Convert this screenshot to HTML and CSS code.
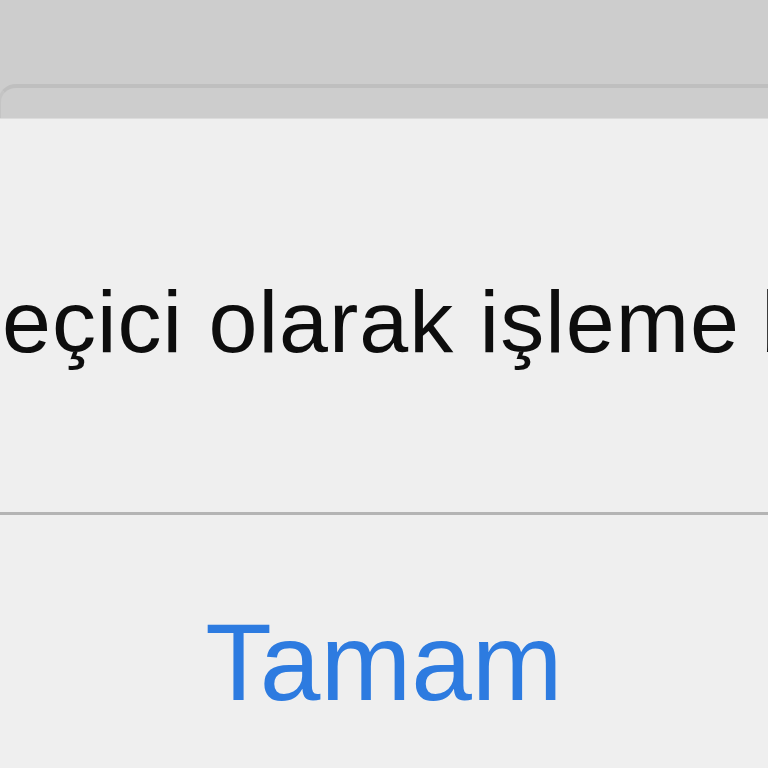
FILE: index.html
```html
<!DOCTYPE html>
<html lang="tr">
<head>
<meta charset="utf-8">
<link rel="stylesheet" href="styles.css">
</head>
<body>
<div class="page">
  <div class="backsheet"></div>
  <div class="alert">
    <div class="message"><p class="message-text">eçici olarak işleme <span class="message-tail">b</span></p></div>
    <div class="divider"></div>
    <div class="action"><span class="action-label">Tamam</span></div>
  </div>
</div>
</body>
</html>
```
FILE: styles.css
```css
html, body {
  margin: 0;
  padding: 0;
  width: 768px;
  height: 768px;
  overflow: hidden;
  background: #cdcdcd;
}
.page {
  width: 768px;
  height: 768px;
  display: flex;
  flex-direction: column;
  background: #cdcdcd;
  font-family: "Liberation Sans", Arial, sans-serif;
}
.backsheet {
  margin-top: 84px;
  margin-left: -2px;
  height: 34px;
  box-sizing: border-box;
  border-top: 4px solid #bfbfbf;
  border-left: 3px solid #c4c4c4;
  border-top-left-radius: 18px;
  background: #cdcdcd;
  flex: none;
}
.alert {
  flex: 1;
  background: #efefef;
  border-top: 1px solid #dcdcdc;
  display: flex;
  flex-direction: column;
}
.message {
  height: 393px;
  box-sizing: border-box;
  padding-top: 153px;
  overflow: hidden;
}
.message-text {
  margin: 0;
  padding-left: 2px;
  font-size: 88px;
  line-height: 100px;
  letter-spacing: 1px;
  color: #0d0d0d;
  white-space: nowrap;
}
.message-tail {
  margin-left: -4px;
}
.divider {
  height: 3px;
  background: #b4b4b4;
  flex: none;
}
.action {
  flex: 1;
  padding-top: 87px;
  text-align: center;
}
.action-label {
  font-size: 109px;
  line-height: 120px;
  color: #2d7be0;
}
```
